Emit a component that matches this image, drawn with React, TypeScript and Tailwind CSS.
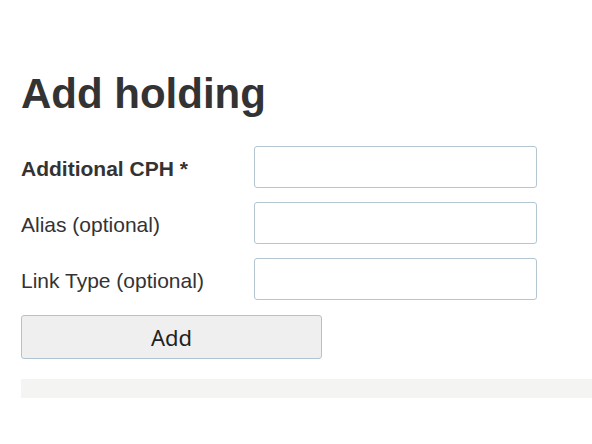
import React from 'react';

const fields = [
  { label: 'Additional CPH *', bold: true },
  { label: 'Alias (optional)', bold: false },
  { label: 'Link Type (optional)', bold: false },
];

export default function App() {
  return (
    <div className="min-h-[444px] bg-white pl-[21px] pt-[73px] text-[#333]" style={{ fontFamily: '"Liberation Sans", Arial, sans-serif' }}>
      <h1 className="text-[42px] font-bold leading-[42px]">Add holding</h1>

      <form className="mt-[31px] flex flex-col" onSubmit={(e) => e.preventDefault()}>
        <div className="flex flex-col gap-[14px]">
          {fields.map((f) => (
            <div key={f.label} className="flex items-center">
              <label className={`mt-[3px] w-[233px] text-[21px] leading-6 ${f.bold ? 'font-bold' : ''}`}>{f.label}</label>
              <input
                type="text"
                className="h-[42px] w-[283px] rounded-[3px] border border-[#b3c6d2] bg-white px-2 outline-none"
              />
            </div>
          ))}
        </div>

        <button
          type="submit"
          className="mt-[15px] h-[44px] w-[301px] rounded-[3px] border border-[#aec4d2] bg-[#efefef] text-[22px] text-[#222]"
          style={{ fontFamily: '"Noto Sans", "Open Sans", sans-serif' }}
        >
          Add
        </button>
      </form>

      <div className="mt-[20px] h-[19px] bg-[#f4f4f2]" />
    </div>
  );
}
